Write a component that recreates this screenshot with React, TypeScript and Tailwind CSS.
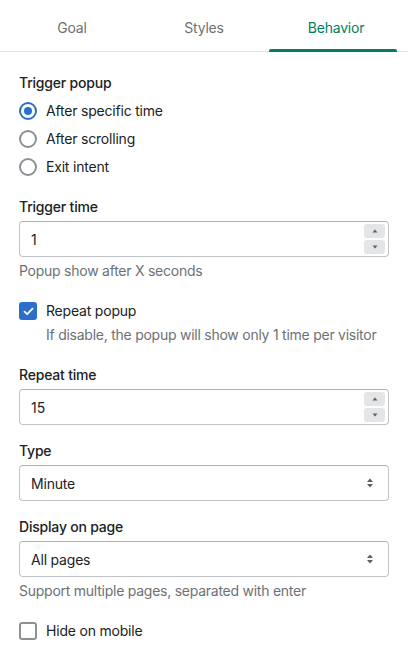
import React from "react";

const font = { fontFamily: "Inter, 'Noto Sans', sans-serif" };

function Radio({ checked, label }: { checked?: boolean; label: string }) {
  return (
    <label className="flex h-[28px] items-center gap-[9px]">
      <span
        className={
          checked
            ? "flex h-[18px] w-[18px] items-center justify-center rounded-full border-2 border-[#2c6ecb]"
            : "flex h-[18px] w-[18px] items-center justify-center rounded-full border-2 border-[#8c9196]"
        }
      >
        {checked && <span className="h-[8px] w-[8px] rounded-full bg-[#2c6ecb]" />}
      </span>
      <span className="text-[14px] leading-[20px] tracking-[-0.2px] text-[#202223]">{label}</span>
    </label>
  );
}

function Checkbox({ checked, label }: { checked?: boolean; label: string }) {
  return (
    <div className="flex h-[20px] items-center gap-[9px]">
      {checked ? (
        <span className="flex h-[18px] w-[18px] items-center justify-center rounded-[3px] bg-[#2c6ecb]">
          <svg width="11" height="9" viewBox="0 0 11 9" fill="none">
            <path d="M1.5 4.6 4.2 7.2 9.5 1.6" stroke="white" strokeWidth="1.8" strokeLinecap="round" strokeLinejoin="round" />
          </svg>
        </span>
      ) : (
        <span className="h-[18px] w-[18px] rounded-[3px] border-2 border-[#8c9196]" />
      )}
      <span className="text-[14px] leading-[20px] tracking-[-0.2px] text-[#202223]">{label}</span>
    </div>
  );
}

function NumberField({ value }: { value: string }) {
  return (
    <div className="flex h-[36px] items-center rounded-[4px] border border-[#c0c4c8] border-t-[#aeb4b9] pl-[11px] pr-[3px]">
      <span className="flex-1 text-[14px] text-[#202223]">{value}</span>
      <div className="flex flex-col gap-[2px]">
        <span className="flex h-[14px] w-[21px] items-center justify-center rounded-[3px] bg-[#e4e5e7]">
          <svg width="6" height="4" viewBox="0 0 6 4">
            <path d="M3 0.5 5.5 3.5H0.5Z" fill="#5c5f62" />
          </svg>
        </span>
        <span className="flex h-[14px] w-[21px] items-center justify-center rounded-[3px] bg-[#e4e5e7]">
          <svg width="6" height="4" viewBox="0 0 6 4">
            <path d="M3 3.5 5.5 0.5H0.5Z" fill="#5c5f62" />
          </svg>
        </span>
      </div>
    </div>
  );
}

function SelectField({ value }: { value: string }) {
  return (
    <div className="flex h-[36px] items-center rounded-[4px] border border-[#c0c4c8] border-t-[#aeb4b9] pl-[11px] pr-[14px]">
      <span className="flex-1 text-[14px] tracking-[-0.2px] text-[#202223]">{value}</span>
      <svg width="8" height="12" viewBox="0 0 8 12">
        <path d="M4 1.5 7 5H1Z" fill="#5c5f62" />
        <path d="M4 10.5 7 7H1Z" fill="#5c5f62" />
      </svg>
    </div>
  );
}

function Label({ children }: { children: React.ReactNode }) {
  return (
    <div className="mb-[4px] text-[14px] font-medium leading-[20px] tracking-[-0.2px] text-[#202223]">
      {children}
    </div>
  );
}

function Help({ children, className }: { children: React.ReactNode; className?: string }) {
  return (
    <div className={"text-[14px] leading-[20px] tracking-[-0.25px] text-[#6d7175] " + (className ?? "")}>
      {children}
    </div>
  );
}

export default function App() {
  const tabs = ["Goal", "Styles", "Behavior"];
  return (
    <div style={font} className="h-[664px] w-[408px] overflow-hidden bg-white">
      <div className="flex border-b border-[#e1e3e5] px-[6px]">
        {tabs.map((t, i) => (
          <div key={t} className="flex flex-1 flex-col items-center">
            <div
              className={
                i === 2
                  ? "flex h-[51px] items-center pt-[4px] text-[14px] tracking-[-0.2px] text-[#008060]"
                  : "flex h-[51px] items-center pt-[4px] text-[14px] tracking-[-0.2px] text-[#6d7175]"
              }
            >
              {t}
            </div>
          </div>
        ))}
      </div>
      <div className="-mt-[3px] flex px-[6px]">
        <div className="flex-1" />
        <div className="flex-1" />
        <div className="flex flex-1 justify-center pl-[7px] pr-[5px]">
          <div className="h-[3px] w-full rounded-t-[2px] bg-[#008060]" />
        </div>
      </div>

      <div className="px-[19px] pt-[21px]">
        <Label>Trigger popup</Label>
        <div className="flex flex-col">
          <Radio checked label="After specific time" />
          <Radio label="After scrolling" />
          <Radio label="Exit intent" />
        </div>

        <div className="mt-[16px]">
          <Label>Trigger time</Label>
          <NumberField value="1" />
          <Help className="mt-[4px]">Popup show after X seconds</Help>
        </div>

        <div className="mt-[20px]">
          <Checkbox checked label="Repeat popup" />
          <Help className="ml-[27px] mt-[4px] whitespace-nowrap">
            If disable, the popup will show only 1 time per visitor
          </Help>
        </div>

        <div className="mt-[20px]">
          <Label>Repeat time</Label>
          <NumberField value="15" />
        </div>

        <div className="mt-[16px]">
          <Label>Type</Label>
          <SelectField value="Minute" />
        </div>

        <div className="mt-[16px]">
          <Label>Display on page</Label>
          <SelectField value="All pages" />
          <Help className="mt-[4px]">Support multiple pages, separated with enter</Help>
        </div>

        <div className="mt-[20px]">
          <Checkbox label="Hide on mobile" />
        </div>
      </div>
    </div>
  );
}
